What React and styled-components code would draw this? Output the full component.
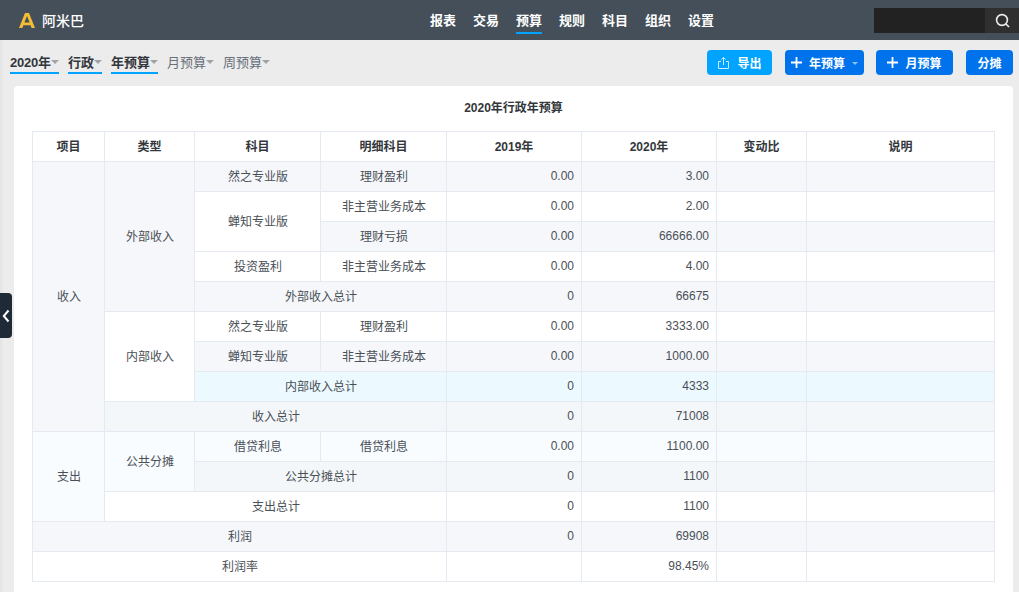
import React from "react";
import styled, { createGlobalStyle } from "styled-components";

const FONT = `"Liberation Sans", "Noto Sans CJK SC", sans-serif`;
const Global = createGlobalStyle`
  html, body { margin: 0; padding: 0; height: 100%; overflow: hidden; }
  body { font-family: ${FONT}; background: #ececec; }
  * { box-sizing: border-box; }
`;
const Page = styled.div`
  width: 1019px; height: 592px; position: relative; overflow: hidden;
  background: linear-gradient(90deg, #e3e3e3 0, #ececec 4px);
`;
const Header = styled.header`
  height: 40px; background: #444f5a; display: grid; grid-template-columns: 430px auto 1fr; align-items: center;
`;
const Brand = styled.div`
  display: flex; align-items: center; gap: 7px; padding-left: 19px; color: #fff; font-size: 14px; font-weight: 500;
`;
const Nav = styled.nav`display: flex; gap: 17px; height: 40px; align-items: stretch;`;
const NavItem = styled.a`
  position: relative; display: flex; align-items: center; height: 38px; color: #fff; font-size: 13px; font-weight: 700;
  ${p => p.$active && `&::after{content:"";position:absolute;left:0;right:0;bottom:4px;height:2px;background:#00a4ff;}`}
`;
const SearchWrap = styled.div`display: flex; justify-content: flex-end; height: 25px;`;
const SearchInput = styled.div`width: 111px; height: 25px; background: #222;`;
const SearchBtn = styled.div`width: 34px; height: 25px; background: #2f2f2f; display: flex; align-items: center; justify-content: center;`;
const Toolbar = styled.div`
  height: 46px; display: flex; align-items: flex-start; justify-content: space-between; padding: 10px 6px 0 10px;
`;
const Filters = styled.div`display: flex; gap: 9px; padding-top: 1px;`;
const Filter = styled.div`
  height: 23px; padding-bottom: 1px; display: flex; align-items: center; font-size: 13px;
  letter-spacing: ${p => (p.$tight ? "-0.2px" : "0")};
  font-weight: ${p => (p.$on ? 700 : 400)}; color: ${p => (p.$on ? "#33373b" : "#68707a")};
  border-bottom: 2px solid ${p => (p.$on ? "#00a4ff" : "transparent")};
`;
const Caret = styled.i`
  display: inline-block; width: 0; height: 0; margin-top: 2px;
  border-left: ${p => p.$size || 4}px solid transparent; border-right: ${p => p.$size || 4}px solid transparent;
  border-top: ${p => p.$size || 4}px solid ${p => p.$color || "#a3a3a3"};
`;
const Actions = styled.div`display: flex;`;
const Button = styled.button`
  height: 25px; width: ${p => p.$w}px; margin-left: ${p => p.$ml}px; border: 0; border-radius: 4px; padding: 0;
  background: ${p => p.$bg || "#0073ec"}; color: #fff; font: 700 12px ${FONT};
  display: flex; align-items: center; justify-content: center; gap: 7px;
`;
const Card = styled.main`
  margin: 0 6px 0 14px; height: 520px; background: #fff; border-radius: 4px 4px 0 0; padding: 0 18px;
`;
const Title = styled.h1`
  margin: 0; height: 45px; line-height: 44px; font-size: 12px; font-weight: 700; color: #33373b; text-align: center;
`;
const Table = styled.table`
  width: 963px; table-layout: fixed; border-collapse: collapse; font-size: 12px; color: #4a4f56;
`;
const Cell = styled.td`
  height: 30px; padding: 0 7px 2px 8px; border: 1px solid #e5e9f2; text-align: ${p => (p.$right ? "right" : "center")};
  background: ${p => p.$bg || "#fff"};
`;
const HeadCell = styled.th`
  height: 30px; padding: 0 0 2px; border: 1px solid #e5e9f2; font-weight: 700; color: #33373b; background: #fff;
`;
const Toggle = styled.div`
  position: absolute; left: 0; top: 293px; width: 12px; height: 45px; background: #1e2a36; border-radius: 0 4px 4px 0;
  display: flex; align-items: center; justify-content: center;
`;

const G = "#f5f7fb", W = "#fff", B = "#ecf9ff", S = "#f4f7fa", L = "#f8fcff";
const NAV = ["报表", "交易", "预算", "规则", "科目", "组织", "设置"];
const FILTERS = [["2020年", 1, 1], ["行政", 1], ["年预算", 1], ["月预算", 0], ["周预算", 0]];
const COLS = [72, 90, 126, 126, 135, 135, 90, 188];
const HEAD = ["项目", "类型", "科目", "明细科目", "2019年", "2020年", "变动比", "说明"];

const Nums = ({ bg, a, b }) => (
  <>
    <Cell $bg={bg} $right>{a}</Cell>
    <Cell $bg={bg} $right>{b}</Cell>
    <Cell $bg={bg} />
    <Cell $bg={bg} />
  </>
);

const Plus = () => (
  <svg width="11" height="11" viewBox="0 0 11 11"><path d="M5.500 0v11M0 5.500h11" stroke="#fff" strokeWidth="1.8" /></svg>
);

export default function App() {
  return (
    <Page>
      <Global />
      <Header>
        <Brand>
          <svg width="16" height="15" viewBox="0 0 16 15">
            <path d="M0 15 6 0h4l6 15h-3.400l-1-2.800H4.400l-1 2.800zM5.400 9.500h5.200L8 3z" fill="#f5bd36" fillRule="evenodd" />
          </svg>
          阿米巴
        </Brand>
        <Nav>
          {NAV.map(n => <NavItem key={n} $active={n === "预算"}>{n}</NavItem>)}
        </Nav>
        <SearchWrap>
          <SearchInput />
          <SearchBtn>
            <svg width="15" height="15" viewBox="0 0 15 15" fill="none" stroke="#eee" strokeWidth="1.6">
              <circle cx="7" cy="7" r="5.400" /><path d="m11 11 3 3" />
            </svg>
          </SearchBtn>
        </SearchWrap>
      </Header>
      <Toolbar>
        <Filters>
          {FILTERS.map(([t, on, tight]) => <Filter key={t} $on={on} $tight={tight}>{t}<Caret /></Filter>)}
        </Filters>
        <Actions>
          <Button $w={65} $bg="#00a4ff">
            <svg width="13" height="14" viewBox="0 0 13 14" fill="none" stroke="#cfeeff" strokeWidth="1">
              <path d="M4 5.500H1.500v7h10v-7H9M6.500 9V1.500M4.300 3.600l2.200-2.200 2.200 2.200" />
            </svg>
            导出
          </Button>
          <Button $w={79} $ml={13}><Plus />年预算<Caret $color="#8fbdf5" $size={3.5} /></Button>
          <Button $w={77} $ml={12}><Plus />月预算</Button>
          <Button $w={47} $ml={13}>分摊</Button>
        </Actions>
      </Toolbar>
      <Card>
        <Title>2020年行政年预算</Title>
        <Table>
          <colgroup>{COLS.map((w, i) => <col key={i} style={{ width: w }} />)}</colgroup>
          <thead><tr>{HEAD.map(h => <HeadCell key={h}>{h}</HeadCell>)}</tr></thead>
          <tbody>
            <tr>
              <Cell rowSpan={9} $bg={G}>收入</Cell>
              <Cell rowSpan={5} $bg={G}>外部收入</Cell>
              <Cell $bg={G}>然之专业版</Cell><Cell $bg={G}>理财盈利</Cell>
              <Nums bg={G} a="0.00" b="3.00" />
            </tr>
            <tr>
              <Cell rowSpan={2}>蝉知专业版</Cell><Cell>非主营业务成本</Cell>
              <Nums bg={W} a="0.00" b="2.00" />
            </tr>
            <tr><Cell $bg={G}>理财亏损</Cell><Nums bg={G} a="0.00" b="66666.00" /></tr>
            <tr><Cell>投资盈利</Cell><Cell>非主营业务成本</Cell><Nums bg={W} a="0.00" b="4.00" /></tr>
            <tr><Cell colSpan={2} $bg={G}>外部收入总计</Cell><Nums bg={G} a="0" b="66675" /></tr>
            <tr>
              <Cell rowSpan={3}>内部收入</Cell>
              <Cell>然之专业版</Cell><Cell>理财盈利</Cell>
              <Nums bg={W} a="0.00" b="3333.00" />
            </tr>
            <tr><Cell $bg={G}>蝉知专业版</Cell><Cell $bg={G}>非主营业务成本</Cell><Nums bg={G} a="0.00" b="1000.00" /></tr>
            <tr><Cell colSpan={2} $bg={B}>内部收入总计</Cell><Nums bg={B} a="0" b="4333" /></tr>
            <tr><Cell colSpan={3} $bg={S}>收入总计</Cell><Nums bg={S} a="0" b="71008" /></tr>
            <tr>
              <Cell rowSpan={3} $bg={L}>支出</Cell>
              <Cell rowSpan={2} $bg={L}>公共分摊</Cell>
              <Cell $bg={L}>借贷利息</Cell><Cell $bg={L}>借贷利息</Cell>
              <Nums bg={L} a="0.00" b="1100.00" />
            </tr>
            <tr><Cell colSpan={2} $bg={S}>公共分摊总计</Cell><Nums bg={S} a="0" b="1100" /></tr>
            <tr><Cell colSpan={3}>支出总计</Cell><Nums bg={W} a="0" b="1100" /></tr>
            <tr><Cell colSpan={4} $bg={G}>利润</Cell><Nums bg={G} a="0" b="69908" /></tr>
            <tr><Cell colSpan={4}>利润率</Cell><Nums bg={W} a="" b="98.45%" /></tr>
          </tbody>
        </Table>
      </Card>
      <Toggle>
        <svg width="8" height="14" viewBox="0 0 8 14" fill="none" stroke="#fff" strokeWidth="2"><path d="M6.500 1.500 1.800 7l4.700 5.500" /></svg>
      </Toggle>
    </Page>
  );
}
